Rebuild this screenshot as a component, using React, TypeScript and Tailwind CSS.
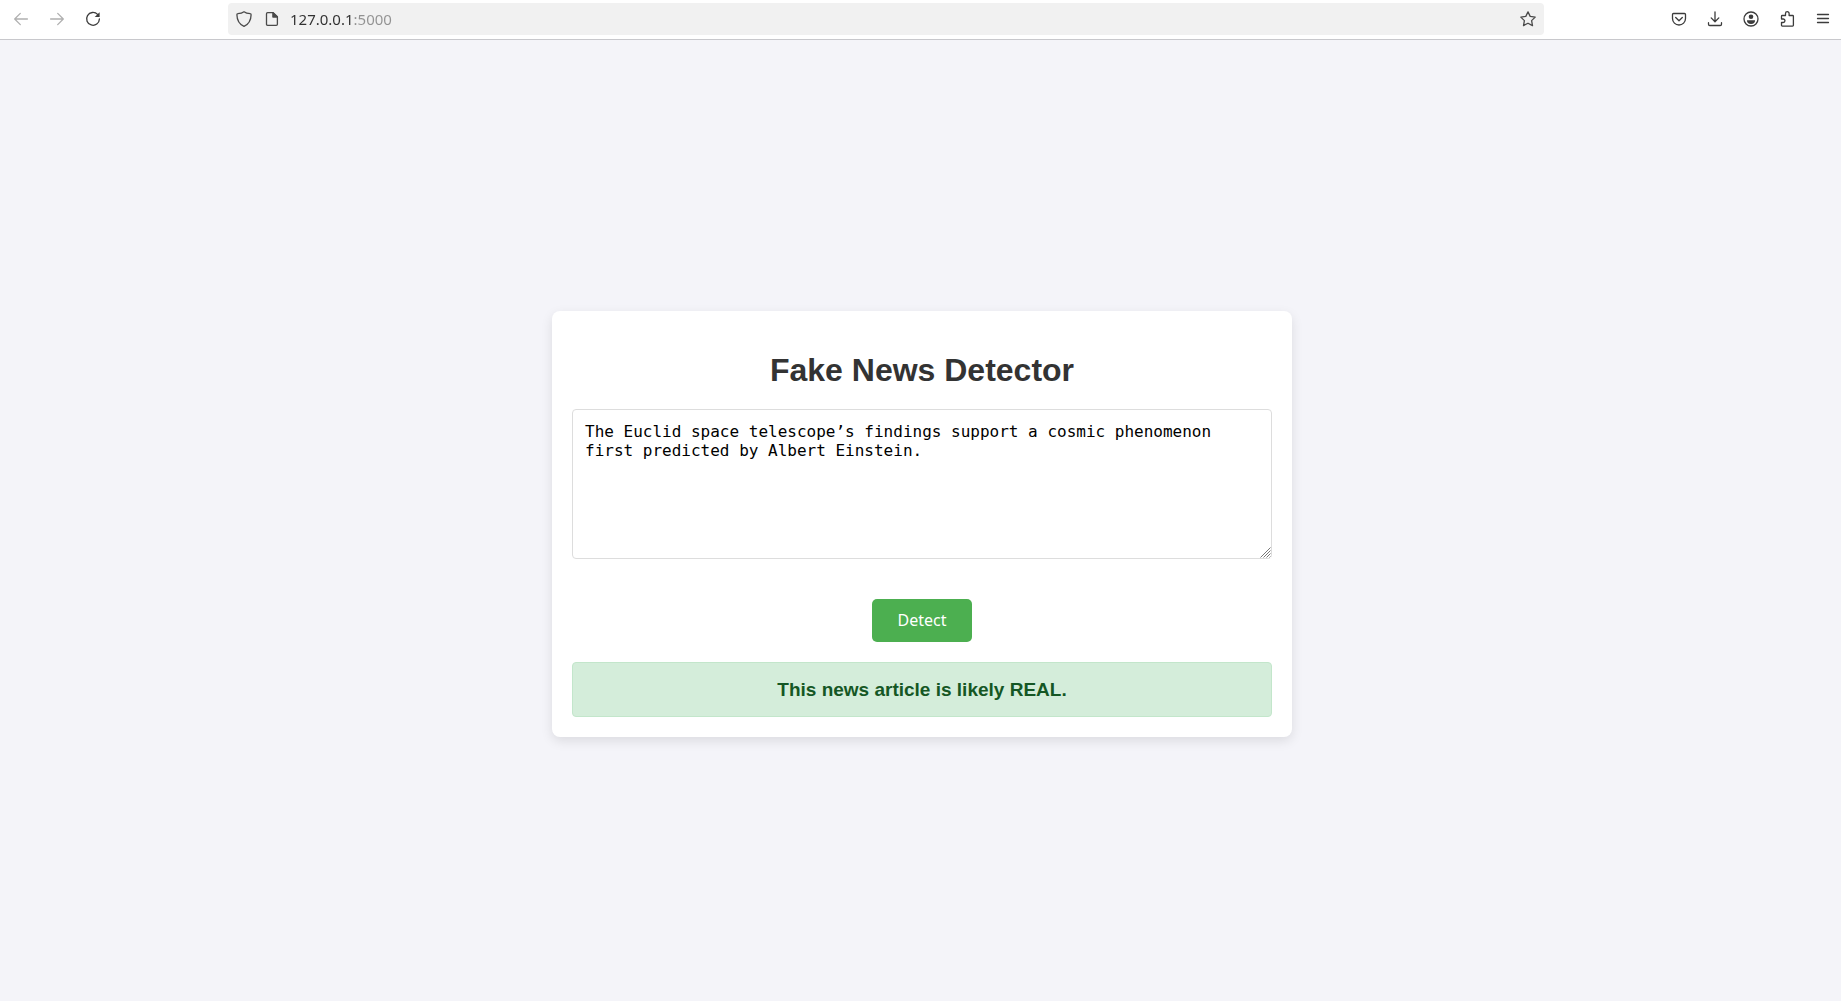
import React, { useState } from "react";

type IconProps = { children: React.ReactNode; className?: string };

function Icon({ children, className = "" }: IconProps) {
  return (
    <svg
      viewBox="0 0 16 16"
      aria-hidden="true"
      className={`size-4 shrink-0 fill-none stroke-current ${className}`}
      strokeWidth="1.3"
      strokeLinecap="round"
      strokeLinejoin="round"
    >
      {children}
    </svg>
  );
}

function ToolbarButton({
  label,
  disabled,
  children,
}: {
  label: string;
  disabled?: boolean;
  children: React.ReactNode;
}) {
  return (
    <button
      type="button"
      aria-label={label}
      disabled={disabled}
      className="flex h-8 w-9 items-center justify-center text-[#3c3c3c] disabled:text-[#b0b0b0]"
    >
      {children}
    </button>
  );
}

function BrowserToolbar() {
  const [url, setUrl] = useState("127.0.0.1:5000");
  return (
    <header className="flex h-10 items-center border-b border-[#c8c8cc] bg-white pb-px">
      <nav aria-label="History" className="flex pl-[3px]">
        <ToolbarButton label="Back" disabled>
          <Icon>
            <path d="M14.4 8H1.8M7.3 2.4 1.7 8l5.6 5.6" />
          </Icon>
        </ToolbarButton>
        <ToolbarButton label="Forward" disabled>
          <Icon>
            <path d="M1.6 8h12.6M8.7 2.4 14.3 8l-5.6 5.6" />
          </Icon>
        </ToolbarButton>
        <ToolbarButton label="Reload">
          <Icon>
            <path d="M12.6 3.4A6.4 6.4 0 1 0 14.4 8" />
            <path d="M14.6 1.2v4.9H9.7z" fill="currentColor" stroke="none" />
          </Icon>
        </ToolbarButton>
      </nav>

      <div className="mx-[117px] flex h-8 flex-1 items-center rounded bg-[#f1f1f1] px-2 text-[#4a4a4a]">
        <button type="button" aria-label="Tracking protection" className="mr-3">
          <Icon>
            <path d="M8 .8c1.7 1.3 3.9 1.8 6.2 1.9.6 0 .9.4.9 1C15 9.6 12.500 13.300 8 15.300 3.500 13.300 1 9.600.9 3.700c0-.6.3-1 .9-1C4.100 2.600 6.300 2.100 8 .8z" />
          </Icon>
        </button>
        <button type="button" aria-label="Site information" className="mr-[10px]">
          <Icon>
            <path d="M3.6 1.600h5.600l4.200 4.200v7.500c0 .7-.4 1.100-1.100 1.100H3.600c-.7 0-1.100-.4-1.100-1.100V2.700c0-.7.4-1.100 1.100-1.100z" />
            <path d="M8.900 1.600v4.500h4.500z" fill="currentColor" />
          </Icon>
        </button>
        <input
          aria-label="Address"
          value={url}
          onChange={(e) => setUrl(e.target.value)}
          className="min-w-0 flex-1 bg-[linear-gradient(90deg,#303030_64px,#929292_64px)] bg-clip-text font-['Noto_Sans',sans-serif] text-[15px] leading-5 text-transparent caret-black outline-none"
        />
        <button type="button" aria-label="Bookmark this page">
          <Icon>
            <path d="m8 .9 2.200 4.500 5 .7-3.600 3.500.9 5L8 12.200l-4.500 2.400.9-5L.8 6.100l5-.7z" />
          </Icon>
        </button>
      </div>

      <div className="flex">
        <ToolbarButton label="Save to Pocket">
          <Icon>
            <path d="M2.500 2.500h11c.6 0 1 .4 1 1V7.500a6.500 6.500 0 0 1-13 0V3.500c0-.6.4-1 1-1z" />
            <path d="M4.700 6.500 8 9.700l3.300-3.200" />
          </Icon>
        </ToolbarButton>
        <ToolbarButton label="Downloads">
          <Icon>
            <path d="M8 .9v9.700M4.200 6.900 8 10.700l3.800-3.800M1.500 11.700v1.500c0 .8.5 1.300 1.300 1.300h10.400c.8 0 1.300-.5 1.300-1.300v-1.500" />
          </Icon>
        </ToolbarButton>
        <ToolbarButton label="Account">
          <Icon>
            <circle cx="8" cy="8" r="7" />
            <circle cx="8" cy="5.700" r="2.300" fill="currentColor" stroke="none" />
            <path d="M4 9.300h8c.3 2.200-1.500 3.700-4 3.700s-4.300-1.500-4-3.700z" fill="currentColor" stroke="none" />
          </Icon>
        </ToolbarButton>
        <ToolbarButton label="Extensions">
          <Icon>
            <path d="M2.500 8V5.300c0-.5.3-.8.8-.8h3.200V2.500a1.800 1.800 0 0 1 3.600 0v2h3.500c.5 0 .8.3.8.8v9c0 .5-.3.8-.8.8H3.300c-.5 0-.8-.3-.8-.8v-2.800h1.700a1.750 1.750 0 0 0 0-3.500z" />
          </Icon>
        </ToolbarButton>
        <ToolbarButton label="Menu">
          <Icon>
            <path d="M2.500 3.500h11M2.500 7.500h11M2.500 11.500h11" />
          </Icon>
        </ToolbarButton>
      </div>
    </header>
  );
}

export default function App() {
  const [text, setText] = useState(
    "The Euclid space telescope’s findings support a cosmic phenomenon first predicted by Albert Einstein."
  );
  const [result, setResult] = useState("This news article is likely REAL.");

  return (
    <div className="flex min-h-screen flex-col bg-[#f4f4f9] font-['Liberation_Sans',Arial,sans-serif]">
      <BrowserToolbar />
      <main className="flex flex-1 items-center justify-center pt-[7px] pl-[3px]">
        <section className="w-full max-w-[740px] rounded-lg bg-white p-5 text-center shadow-[0_4px_12px_rgba(0,0,0,0.1)]">
          <h1 className="mt-[21px] mb-5 text-[32px] leading-[37px] font-bold text-[#333]">
            Fake News Detector
          </h1>
          <form
            onSubmit={(e) => {
              e.preventDefault();
              setResult("This news article is likely REAL.");
            }}
          >
            <div className="relative">
              <textarea
                aria-label="News article text"
                value={text}
                spellCheck={false}
                onChange={(e) => setText(e.target.value)}
                className="block h-[150px] w-full resize-y rounded border border-[#ddd] bg-white p-3 font-['DejaVu_Sans_Mono',monospace] text-[16px] leading-[19px] text-black outline-none [&::-webkit-resizer]:bg-white"
              />
              <svg
                viewBox="0 0 11 11"
                aria-hidden="true"
                className="pointer-events-none absolute right-px bottom-px size-[11px] fill-none stroke-[#777]"
              >
                <path d="M.5 10.500l10-10M3.500 10.500l7-7M6.500 10.500l4-4M9.500 10.500l1-1" />
              </svg>
            </div>
            <button
              type="submit"
              className="mt-10 h-[43px] w-[100px] rounded-[5px] bg-[#4caf50] font-['Noto_Sans',sans-serif] text-[16px] leading-[19px] text-white"
            >
              Detect
            </button>
          </form>
          <p
            role="status"
            className="mt-5 rounded border border-[#c3e6cb] bg-[#d4edda] p-4 text-[19px] leading-[21px] font-bold text-[#155724]"
          >
            {result}
          </p>
        </section>
      </main>
    </div>
  );
}
